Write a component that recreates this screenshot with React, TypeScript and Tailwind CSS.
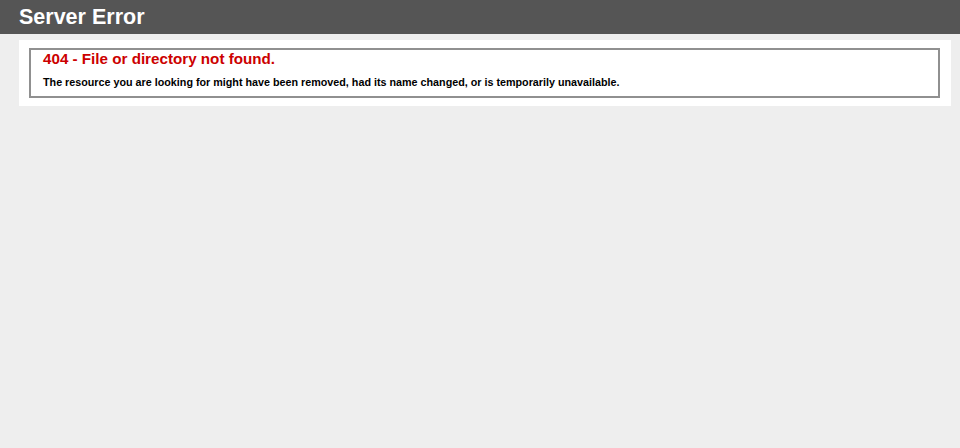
export default function App() {
  return (
    <div className="min-h-[448px] bg-[#eeeeee] font-['Liberation_Sans',Arial,Helvetica,sans-serif] text-[9px]">
      {/* Header bar */}
      <div className="bg-[#555555] px-[19px] py-[5px] text-white">
        <h1 className="m-0 text-[21.5px] font-bold leading-[24px]">Server Error</h1>
      </div>

      {/* Error panel */}
      <div className="ml-[19px] mt-[6px] w-[932px] bg-white px-[8px] py-[8px]">
        <fieldset className="mx-[2px] mr-[3px] border-2 border-[#909090] px-[12px] pt-0 pb-[8px]">
          <h2 className="m-0 text-[15.2px] font-bold leading-[18px] text-[#cc0000]">
            404 - File or directory not found.
          </h2>
          <h3 className="mt-[8px] text-[10.75px] font-bold leading-[12px] text-black">
            The resource you are looking for might have been removed, had its name changed, or is temporarily unavailable.
          </h3>
        </fieldset>
      </div>
    </div>
  )
}
